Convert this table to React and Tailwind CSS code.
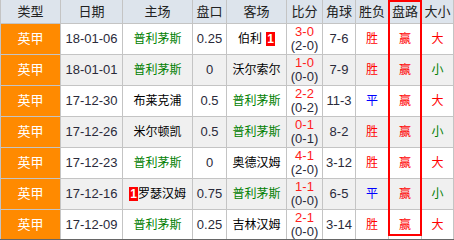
import React from 'react';

const widths = ['w-[61px] border-l', 'w-[62px]', 'w-[70px]', 'w-[34px]', 'w-[60px]', 'w-[36px]', 'w-[33px]', 'w-[33px]', 'w-[33px]', 'w-[32px]'];
const heads = ['类型', '日期', '主场', '盘口', '客场', '比分', '角球', '胜负', '盘路', '大小'];

const rows = [
  { date: '18-01-06', home: '普利茅斯', homeUs: true, line: '0.25', away: '伯利', awayBadge: true, score: '3-0', half: '(2-0)', corner: '7-6', res: '胜', size: '大' },
  { date: '18-01-01', home: '普利茅斯', homeUs: true, line: '0', away: '沃尔索尔', score: '1-0', half: '(0-0)', corner: '7-9', res: '胜', size: '小' },
  { date: '17-12-30', home: '布莱克浦', line: '0.5', away: '普利茅斯', awayUs: true, score: '2-2', half: '(0-2)', corner: '11-3', res: '平', size: '大' },
  { date: '17-12-26', home: '米尔顿凯', line: '0.5', away: '普利茅斯', awayUs: true, score: '0-1', half: '(0-1)', corner: '8-2', res: '胜', size: '小' },
  { date: '17-12-23', home: '普利茅斯', homeUs: true, line: '0', away: '奥德汉姆', score: '4-1', half: '(2-0)', corner: '3-12', res: '胜', size: '大' },
  { date: '17-12-16', home: '罗瑟汉姆', homeBadge: true, line: '0.75', away: '普利茅斯', awayUs: true, score: '1-1', half: '(0-0)', corner: '6-5', res: '平', size: '小' },
  { date: '17-12-09', home: '普利茅斯', homeUs: true, line: '0.25', away: '吉林汉姆', score: '2-1', half: '(0-0)', corner: '3-14', res: '胜', size: '大' },
];

const Badge = () => (
  <span className="inline-block bg-[#ff0000] text-white font-bold text-[12px] leading-[14px] w-[9px] text-center">1</span>
);

const cell = 'flex items-center justify-center border-r border-b border-[#c4c4c4] shrink-0';

export default function App() {
  return (
    <div
      className="relative w-[454px] h-[240px] overflow-hidden bg-white text-[12px]"
      style={{ fontFamily: '"Liberation Sans", "Noto Sans CJK SC", sans-serif' }}
    >
      {/* header */}
      <div className="flex h-[24px] bg-[#dde4ec] text-[#222] text-[13px]">
        {heads.map((h, i) => (
          <div key={h} className={`${cell} ${widths[i]}`}>{h}</div>
        ))}
      </div>

      {rows.map((r, idx) => (
        <div key={r.date} className={`flex h-[31px] ${idx % 2 ? 'bg-[#f0f0f0]' : 'bg-white'}`}>
          <div className={`${cell} ${widths[0]} bg-[#ff8a00] text-white text-[13px]`}>英甲</div>
          <div className={`${cell} ${widths[1]} text-[#2a2a3a] text-[13px]`}>{r.date}</div>
          <div className={`${cell} ${widths[2]} ${r.homeUs ? 'text-[#008000]' : 'text-black'}`}>
            {r.homeBadge && <Badge />}
            {r.home}
          </div>
          <div className={`${cell} ${widths[3]} text-[#2a2a3a] text-[13px]`}>{r.line}</div>
          <div className={`${cell} ${widths[4]} gap-[4px] ${r.awayUs ? 'text-[#008000]' : 'text-black'}`}>
            {r.away}
            {r.awayBadge && <Badge />}
          </div>
          <div className={`${cell} ${widths[5]} flex-col leading-[14px] text-[13px]`}>
            <span className="text-[#ff2020]">{r.score}</span>
            <span className="text-[#2a2a3a]">{r.half}</span>
          </div>
          <div className={`${cell} ${widths[6]} text-[#2a2a3a] text-[13px]`}>{r.corner}</div>
          <div className={`${cell} ${widths[7]} ${r.res === '平' ? 'text-[#0000ff]' : 'text-[#ff0000]'}`}>{r.res}</div>
          <div className={`${cell} ${widths[8]} text-[#ff0000]`}>赢</div>
          <div className={`${cell} ${widths[9]} ${r.size === '大' ? 'text-[#ff0000]' : 'text-[#008000]'}`}>{r.size}</div>
        </div>
      ))}

      {/* highlight on 盘路 column */}
      <div className="absolute left-[388px] top-0 w-[34px] h-[236px] border-2 border-[#ff0000] pointer-events-none" />
      <div className="absolute left-0 right-0 bottom-0 h-px bg-[#666]" />
    </div>
  );
}
